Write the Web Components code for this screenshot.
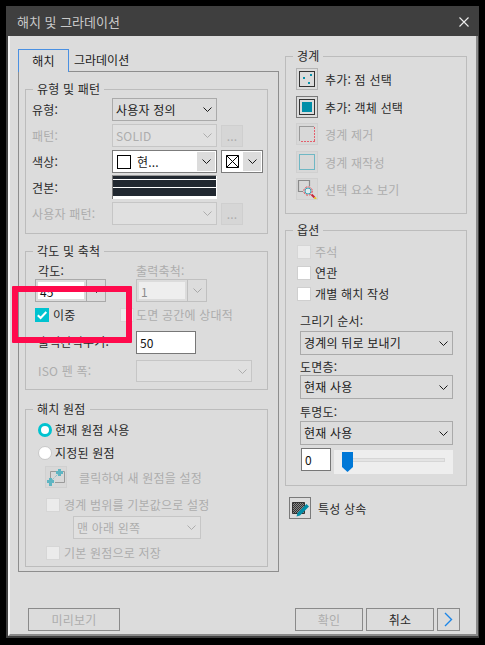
<!DOCTYPE html>
<html lang="ko">
<head>
<meta charset="utf-8">
<title>해치 및 그라데이션</title>
<style>
  html, body { margin: 0; background: #000; }
</style>
</head>
<body>
<hatch-dialog></hatch-dialog>
<script>
const chevron = `<svg width="9" height="5" viewBox="0 0 9 5"><path d="M.5.5l4 4 4-4" fill="none" stroke="currentColor"/></svg>`;

/* ---------- small controls ---------- */

class UiGroup extends HTMLElement {
  constructor() {
    super();
    this.attachShadow({ mode: "open" }).innerHTML = `
      <style>
        :host { display: block; box-sizing: border-box; border: 1px solid #bcbcbc; }
        .legend { display: table; margin: -9px 0 0 7px; padding: 0 4px; height: 16px; line-height: 16px; background: #dcdcdc; color: #2a2a2a; }
      </style>
      <div class="legend">${this.getAttribute("label")}</div>
      <slot></slot>`;
  }
}

class UiCombo extends HTMLElement {
  constructor() {
    super();
    this.attachShadow({ mode: "open" }).innerHTML = `
      <style>
        :host { display: flex; box-sizing: border-box; height: 23px; align-items: center; border: 1px solid #aaa; color: #1a1a1a; background: #dcdcdc; }
        :host([disabled]) { border-color: #c6c6c6; background: #e0e0e0; color: #adadad; }
        :host([boxed]) { border-color: #7c7c7c; background: #fff; }
        .text { flex: 1; min-width: 0; padding-left: 3px; white-space: nowrap; display: flex; align-items: center; height: 100%; }
        .arrow { flex: none; width: 18px; height: 100%; display: flex; align-items: center; justify-content: center; }
        :host([boxed]) .arrow { background: #dcdcdc; margin: 1px 1px 1px 0; height: auto; align-self: stretch; }
        svg { display: block; }
      </style>
      <div class="text"><slot></slot></div>
      <div class="arrow">${chevron}</div>`;
  }
}

class UiSpin extends HTMLElement {
  constructor() {
    super();
    this.attachShadow({ mode: "open" }).innerHTML = `
      <style>
        :host { display: flex; box-sizing: border-box; width: 71px; height: 23px; border: 1px solid #aaa; color: #111; }
        :host([disabled]) { border-color: #c0c0c0; color: #8c8c8c; }
        .value { flex: 1; margin: 2px; padding-left: 2px; background: #fff; line-height: 19px; }
        :host([disabled]) .value { background: #eee; }
        .arrow { flex: none; width: 18px; display: flex; align-items: center; justify-content: center; border-left: 1px solid #aaa; }
        :host([disabled]) .arrow { border-color: #c0c0c0; color: #a8a8a8; }
      </style>
      <div class="value"><slot></slot></div>
      <div class="arrow">${chevron}</div>`;
  }
}

class UiCheck extends HTMLElement {
  constructor() {
    super();
    this.attachShadow({ mode: "open" }).innerHTML = `
      <style>
        :host { display: flex; align-items: center; gap: 4px; height: 14px; color: #2a2a2a; white-space: nowrap; }
        :host([disabled]) { color: #adadad; }
        .box { flex: none; box-sizing: border-box; width: 14px; height: 14px; background: #fff; border: 1px solid #cfcfcf; }
        :host([disabled]) .box { background: #ebebeb; border-color: #d6d6d6; }
        :host([checked]) .box { background: #00c3d0; border-color: #00c3d0; }
        svg { display: block; }
      </style>
      <div class="box">${this.hasAttribute("checked") ? `<svg width="12" height="12" viewBox="0 0 12 12"><path d="M1.800 6.200l2.800 2.800L10.300 3" fill="none" stroke="#fff" stroke-width="2"/></svg>` : ""}</div>
      <slot></slot>`;
  }
}

class UiRadio extends HTMLElement {
  constructor() {
    super();
    this.attachShadow({ mode: "open" }).innerHTML = `
      <style>
        :host { display: flex; align-items: center; gap: 3px; height: 14px; color: #2a2a2a; white-space: nowrap; }
        .dot { flex: none; box-sizing: border-box; width: 14px; height: 14px; border-radius: 50%; background: #fff; border: 1px solid #c8c8c8; }
        :host([checked]) .dot { border: 3px solid #00c3d0; }
      </style>
      <div class="dot"></div>
      <slot></slot>`;
  }
}

class UiButton extends HTMLElement {
  constructor() {
    super();
    this.attachShadow({ mode: "open" }).innerHTML = `
      <style>
        :host { display: flex; box-sizing: border-box; height: 23px; align-items: center; justify-content: center; border: 1px solid #8a8a8a; color: #2a2a2a; }
        :host([disabled]) { color: #adadad; }
        :host([flat]) { border-color: #cfcfcf; background: #d6d6d6; }
      </style>
      <slot></slot>`;
  }
}

class UiTool extends HTMLElement {
  constructor() {
    super();
    this.attachShadow({ mode: "open" }).innerHTML = `
      <style>
        :host { display: flex; align-items: center; gap: 7px; height: 22px; color: #2a2a2a; white-space: nowrap; }
        :host([disabled]) { color: #adadad; }
        .face { flex: none; box-sizing: border-box; width: 22px; height: 22px; border: 1px solid #b4b4b4; }
        :host([active]) .face { border-color: #7a7a7a; }
        :host([disabled]) .face { border-color: #d0d0d0; background: #d8d8d8; }
        .text { padding-top: 2px; }
        ::slotted(svg) { display: block; }
      </style>
      <div class="face"><slot name="icon"></slot></div>
      <div class="text"><slot></slot></div>`;
  }
}

/* ---------- left column groups ---------- */

class PatternGroup extends HTMLElement {
  constructor() {
    super();
    this.attachShadow({ mode: "open" }).innerHTML = `
      <style>
        :host { display: block; }
        ui-group { height: 145px; padding: 0; }
        .rows { padding: 1px 0 0 6px; display: flex; flex-direction: column; gap: 3px; }
        .row { display: flex; align-items: center; height: 23px; }
        .row > span { width: 80px; color: #2a2a2a; }
        .off > span { color: #adadad; }
        ui-combo { width: 105px; }
        ui-combo.small { width: 42px; margin-left: 4px; }
        .dots { width: 22px; height: 22px; margin-left: 4px; line-height: 26px; font-size: 12px; }
        .swatch { box-sizing: border-box; width: 14px; height: 14px; border: 1px solid #000; background: #fff; margin: 0 6px 0 1px; flex: none; }
        .sample { box-sizing: border-box; width: 105px; height: 24px; margin-top: -1px; border-left: 1px solid #777; border-right: 1px solid #fff; border-top: 1px solid #999; background: linear-gradient(#212830 0 3px, #fff 3px 4px, #212830 4px 11px, #fff 11px 12px, #212830 12px 20px, #fff 20px 23px); }
      </style>
      <ui-group label="유형 및 패턴">
        <div class="rows">
          <div class="row"><span>유형:</span><ui-combo>사용자 정의</ui-combo></div>
          <div class="row off"><span>패턴:</span><ui-combo disabled>SOLID</ui-combo><ui-button class="dots" flat disabled>...</ui-button></div>
          <div class="row"><span>색상:</span><ui-combo boxed><i class="swatch"></i>현...</ui-combo>
            <ui-combo class="small" boxed><svg width="14" height="14" viewBox="0 0 14 14" style="margin-left:1px"><path d="M.5.5h12v12H.5zM.5.5l12 12M12.5.5l-12 12" fill="#fff" stroke="#000"/></svg></ui-combo></div>
          <div class="row"><span>견본:</span><div class="sample"></div></div>
          <div class="row off"><span>사용자 패턴:</span><ui-combo disabled></ui-combo><ui-button class="dots" flat disabled>...</ui-button></div>
        </div>
      </ui-group>`;
  }
}

class ScaleGroup extends HTMLElement {
  constructor() {
    super();
    this.attachShadow({ mode: "open" }).innerHTML = `
      <style>
        :host { display: block; }
        ui-group { height: 139px; }
        .rows { padding: 3px 0 0 9px; }
        .row { display: flex; align-items: center; }
        .row > :first-child { width: 101px; flex: none; }
        .label { color: #2a2a2a; padding-left: 3px; box-sizing: border-box; }
        .off { color: #adadad; }
        .field { box-sizing: border-box; width: 60px; height: 23px; border: 1px solid #777; background: #fff; padding-left: 3px; line-height: 21px; color: #111; }
        .iso { width: 116px; height: 22px; }
      </style>
      <ui-group label="각도 및 축척">
        <div class="rows">
          <div class="row" style="height:17px"><span class="label">각도:</span><span class="off">출력축척:</span></div>
          <div class="row" style="height:23px"><div><ui-spin>45</ui-spin></div><ui-spin disabled>1</ui-spin></div>
          <div class="row" style="height:15px;margin-top:5px">
            <div style="width:85px;flex:none"><ui-check checked>이중</ui-check></div>
            <ui-check disabled style="gap:2px">도면 공간에 상대적</ui-check>
          </div>
          <div class="row" style="height:22px;margin-top:9px"><span class="label">출력간격두기:</span><div class="field">50</div></div>
          <div class="row" style="height:22px;margin-top:7px"><span class="label off">ISO 펜 폭:</span><ui-combo class="iso" disabled></ui-combo></div>
        </div>
      </ui-group>`;
  }
}

class OriginGroup extends HTMLElement {
  constructor() {
    super();
    this.attachShadow({ mode: "open" }).innerHTML = `
      <style>
        :host { display: block; }
        ui-group { height: 158px; }
        .rows { padding: 6px 0 0 12px; }
        ui-tool { margin: 6px 0 0 7px; gap: 12px; }
        .checks { margin-left: 8px; }
        ui-combo { width: 128px; margin: 4px 0 0 27px; }
      </style>
      <ui-group label="해치 원점">
        <div class="rows">
          <ui-radio checked>현재 원점 사용</ui-radio>
          <ui-radio style="margin-top:9px">지정된 원점</ui-radio>
          <ui-tool disabled>
            <svg slot="icon" width="20" height="20" viewBox="0 0 20 20"><path d="M4.500 11V4.500h14v11H9" fill="none" stroke="#9a9a9a"/><path d="M6 13l7-7" stroke="#6fb7c4" stroke-dasharray="1 1"/><path d="M12 2h3v2h2v3h-2v2h-3V7h-2V4h2zM3 11h3v2h2v3H6v3H3v-3H1v-3h2z" fill="#5fb5c2"/></svg>
            클릭하여 새 원점을 설정
          </ui-tool>
          <div class="checks">
            <ui-check disabled style="margin-top:10px">경계 범위를 기본값으로 설정</ui-check>
            <ui-combo disabled>맨 아래 왼쪽</ui-combo>
            <ui-check disabled style="margin-top:7px">기본 원점으로 저장</ui-check>
          </div>
        </div>
      </ui-group>`;
  }
}

/* ---------- right column groups ---------- */

class BoundaryGroup extends HTMLElement {
  constructor() {
    super();
    this.attachShadow({ mode: "open" }).innerHTML = `
      <style>
        :host { display: block; }
        ui-group { height: 158px; }
        .tools { padding: 4px 0 0 10px; display: flex; flex-direction: column; gap: 5.500px; }
      </style>
      <ui-group label="경계">
        <div class="tools">
          <ui-tool>
            <svg slot="icon" width="20" height="20" viewBox="0 0 20 20" shape-rendering="crispEdges"><path d="M2.500 2.500h15v15h-15z" fill="none" stroke="#333"/><path d="M6 8h2v2H6zM13 5h2v2h-2zM11 13h2v2h-2z" fill="#0a93ad"/></svg>
            추가: 점 선택
          </ui-tool>
          <ui-tool active>
            <svg slot="icon" width="20" height="20" viewBox="0 0 20 20" shape-rendering="crispEdges"><path d="M2.500 2.500h15v15h-15z" fill="none" stroke="#333"/><path d="M5 5h10v10H5z" fill="#008ea8"/></svg>
            추가: 객체 선택
          </ui-tool>
          <ui-tool disabled>
            <svg slot="icon" width="20" height="20" viewBox="0 0 20 20" shape-rendering="crispEdges"><path d="M2.500 17V2.500H17" fill="none" stroke="#999"/><path d="M17.500 2.500v15h-15" fill="none" stroke="#e4606d" stroke-dasharray="2 1"/></svg>
            경계 제거
          </ui-tool>
          <ui-tool disabled>
            <svg slot="icon" width="20" height="20" viewBox="0 0 20 20" shape-rendering="crispEdges"><path d="M2.500 2.500h15v15h-15z" fill="none" stroke="#6fb7c4"/></svg>
            경계 재작성
          </ui-tool>
          <ui-tool disabled>
            <svg slot="icon" width="20" height="20" viewBox="0 0 20 20"><path d="M6 12.500H1.500v-11h11V7" fill="none" stroke="#8a8a8a" stroke-width="1.200"/><circle cx="11" cy="12" r="3" fill="#dcecef" stroke="#3aa6b8"/><circle cx="11" cy="12" r="4.200" fill="none" stroke="#e4404d" stroke-dasharray="2 1.300"/><path d="M14.500 15.500l3 3" stroke="#c8283a" stroke-width="2"/><path d="M17.500 18.500l1.500 1.500" stroke="#e8c820" stroke-width="2"/></svg>
            선택 요소 보기
          </ui-tool>
        </div>
      </ui-group>`;
  }
}

class OptionsGroup extends HTMLElement {
  constructor() {
    super();
    this.attachShadow({ mode: "open" }).innerHTML = `
      <style>
        :host { display: block; }
        ui-group { height: 256px; }
        .checks { padding: 7px 0 0 11px; display: flex; flex-direction: column; gap: 7px; }
        .select { padding: 12px 0 0 14px; }
        .cap { height: 16px; line-height: 16px; color: #2a2a2a; }
        ui-combo { width: 153px; height: 24px; }
        .opacity { display: flex; margin: 3px 0 0 1px; }
        .num { box-sizing: border-box; width: 30px; height: 23px; border: 1px solid #777; background: #fff; padding-left: 3px; line-height: 21px; color: #111; }
        .slider { position: relative; width: 119px; height: 24px; margin: 2px 0 0 3px; background: #eee; }
        .track { box-sizing: border-box; margin: 0 8px; position: relative; top: 8px; height: 4px; border: 1px solid #d6d6d6; background: #e4e4e4; }
        svg { position: absolute; left: 8px; top: 2px; display: block; }
      </style>
      <ui-group label="옵션">
        <div class="checks">
          <ui-check disabled>주석</ui-check>
          <ui-check>연관</ui-check>
          <ui-check>개별 해치 작성</ui-check>
        </div>
        <div class="select">
          <div class="cap">그리기 순서:</div>
          <ui-combo style="margin-top:2px">경계의 뒤로 보내기</ui-combo>
          <div class="cap" style="margin-top:4px">도면층:</div>
          <ui-combo>현재 사용</ui-combo>
          <div class="cap" style="margin-top:5px">투명도:</div>
          <ui-combo style="margin-top:1px">현재 사용</ui-combo>
          <div class="opacity">
            <div class="num">0</div>
            <div class="slider">
              <div class="track"></div>
              <svg width="11" height="20" viewBox="0 0 11 20"><path d="M0 0h11v15l-5.500 5L0 15z" fill="#0078d7"/></svg>
            </div>
          </div>
        </div>
      </ui-group>`;
  }
}

/* ---------- the dialog ---------- */

class HatchDialog extends HTMLElement {
  constructor() {
    super();
    this.attachShadow({ mode: "open" }).innerHTML = `
      <style>
        :host {
          display: flex; flex-direction: column; position: relative; box-sizing: border-box;
          width: 473px; height: 632px; margin: 6px 0 0 6px; padding: 0 1px 2px 2px; background: #3f3f3f;
          font: 12px/16px "Noto Sans CJK KR", "Liberation Sans", sans-serif; letter-spacing: .2px; color: #2a2a2a;
        }
        .title { flex: none; box-sizing: border-box; height: 30px; display: flex; align-items: center; justify-content: space-between; padding: 2px 9px 0 9px; color: #c9c9c9; font-size: 13px; letter-spacing: 0; }
        .title svg { display: block; }
        .body { flex: 1; display: flex; flex-direction: column; min-height: 0; background: #dcdcdc; border: 2px solid #8a8a8a; border-width: 0 2px 2px 0; border-left: 2px solid #f3f3f3; }
        .main { display: flex; gap: 6px; padding: 13px 0 0 8px; }
        .left { width: 261px; flex: none; }
        .right { width: 182px; flex: none; padding-top: 7px; }
        .tabs { display: flex; height: 23px; position: relative; margin-bottom: -1px; }
        .tab { box-sizing: border-box; width: 51px; height: 23px; padding-top: 3px; text-align: center; border: 1px solid #4a90e2; border-bottom: 0; background: #dcdcdc; color: #1a1a1a; }
        .tab2 { padding: 3px 0 0 5px; color: #1a1a1a; letter-spacing: 0; }
        .panel { box-sizing: border-box; height: 501px; border: 1px solid #8e8e8e; padding: 17px 10px 0 6px; display: flex; flex-direction: column; gap: 17px; }
        options-group { margin-top: 16px; }
        .inherit { margin: 11px 0 0 4px; }
        .foot { margin-top: auto; display: flex; gap: 3px; padding: 0 16px 3px 18px; }
        .foot ui-button:first-child { width: 92px; margin-right: auto; }
        .foot .wide { width: 68px; }
        .foot .next { width: 23px; color: #1c86e8; }
        .foot svg { display: block; }
        .mark { position: absolute; left: 6px; top: 280px; box-sizing: border-box; width: 120px; height: 57px; border: 6.500px solid #ff0a4c; border-radius: 1px; }
      </style>
      <div class="title">
        <span>해치 및 그라데이션</span>
        <svg width="10" height="10" viewBox="0 0 10 10"><path d="M.5.5l9 9M9.500.5l-9 9" stroke="#eee" stroke-width="1.100"/></svg>
      </div>
      <div class="body">
        <div class="main">
          <div class="left">
            <div class="tabs"><div class="tab">해치</div><div class="tab2">그라데이션</div></div>
            <div class="panel">
              <pattern-group></pattern-group>
              <scale-group></scale-group>
              <origin-group style="margin-top:2px"></origin-group>
            </div>
          </div>
          <div class="right">
            <boundary-group></boundary-group>
            <options-group></options-group>
            <ui-tool class="inherit" active>
              <svg slot="icon" width="20" height="20" viewBox="0 0 20 20"><defs><pattern id="hatch" width="2" height="2" patternUnits="userSpaceOnUse"><path d="M0 0h2v2H0z" fill="#888"/><path d="M0 0h1v1H0zM1 1h1v1H1z" fill="#333"/></pattern></defs><path d="M2.500 4.500h12v11h-12z" fill="url(#hatch)" stroke="#333"/><path d="M6.500 18.500l1-3.500 9-9 2.500 2.500-9 9z" fill="#008ea8"/></svg>
              특성 상속
            </ui-tool>
          </div>
        </div>
        <div class="foot">
          <ui-button disabled>미리보기</ui-button>
          <ui-button class="wide" disabled>확인</ui-button>
          <ui-button class="wide">취소</ui-button>
          <ui-button class="next"><svg width="9" height="15" viewBox="0 0 9 15"><path d="M1 1l6.500 6.500L1 14" fill="none" stroke="currentColor" stroke-width="1.400"/></svg></ui-button>
        </div>
      </div>
      <div class="mark"></div>`;
  }
}

customElements.define("ui-group", UiGroup);
customElements.define("ui-combo", UiCombo);
customElements.define("ui-spin", UiSpin);
customElements.define("ui-check", UiCheck);
customElements.define("ui-radio", UiRadio);
customElements.define("ui-button", UiButton);
customElements.define("ui-tool", UiTool);
customElements.define("pattern-group", PatternGroup);
customElements.define("scale-group", ScaleGroup);
customElements.define("origin-group", OriginGroup);
customElements.define("boundary-group", BoundaryGroup);
customElements.define("options-group", OptionsGroup);
customElements.define("hatch-dialog", HatchDialog);
</script>
</body>
</html>
